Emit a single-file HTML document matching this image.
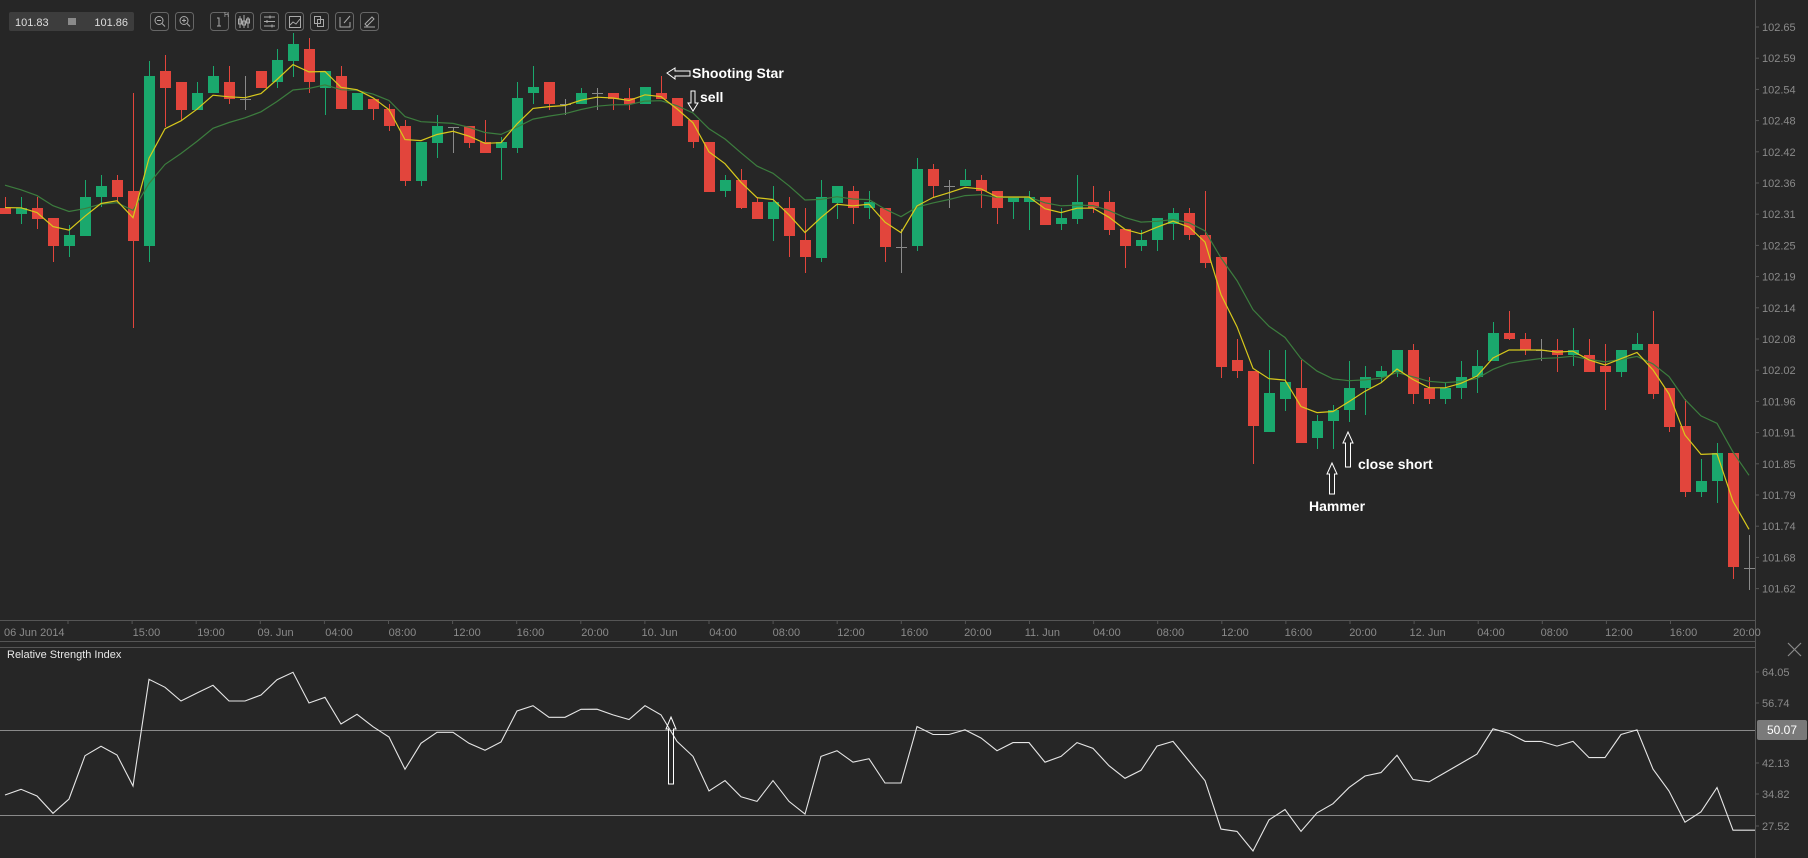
<!DOCTYPE html>
<html><head><meta charset="utf-8">
<style>
html,body{margin:0;padding:0;background:#262626;width:1808px;height:858px;overflow:hidden}
svg{display:block}
text{font-family:"Liberation Sans",sans-serif}
</style></head>
<body>
<svg id="s" width="1808" height="858" viewBox="0 0 1808 858" xmlns="http://www.w3.org/2000/svg">
<rect width="1808" height="858" fill="#262626"/>
<line x1="1755.5" y1="0" x2="1755.5" y2="858" stroke="#555" stroke-width="1"/>
<line x1="0" y1="620.5" x2="1755" y2="620.5" stroke="#555"/>
<line x1="0" y1="641.5" x2="1755" y2="641.5" stroke="#555"/>
<line x1="0" y1="647.5" x2="1755" y2="647.5" stroke="#555"/>
<line x1="0" y1="730.5" x2="1755" y2="730.5" stroke="#8a8a8a"/>
<line x1="0" y1="815.5" x2="1755" y2="815.5" stroke="#8a8a8a"/>
<g id="c"></g>
<g id="ax" fill="#8a8a8a" font-size="11"></g>
<text x="7" y="658" fill="#e8e8e8" font-size="11">Relative Strength Index</text>
<path d="M1788 643 L1801 656 M1801 643 L1788 656" stroke="#8a8a8a" stroke-width="1.2"/>
<rect x="1757" y="720" width="50" height="20" rx="2" fill="#7a7a7a"/>
<text x="1782" y="734" fill="#fff" font-size="12" text-anchor="middle">50.07</text>
<!-- toolbar -->
<rect x="9" y="12" width="125" height="19" rx="2" fill="#3d3d3d"/>
<text x="15" y="26" fill="#ddd" font-size="11">101.83</text>
<rect x="68" y="18" width="8" height="7" fill="#8a8a8a"/>
<text x="128" y="26" fill="#ddd" font-size="11" text-anchor="end">101.86</text>
<g fill="none" stroke="#666" stroke-width="1">
<rect x="150.5" y="12.5" width="18" height="18" rx="3"/>
<rect x="175.5" y="12.5" width="18" height="18" rx="3"/>
<rect x="210.5" y="12.5" width="18" height="18" rx="3"/>
<rect x="235.5" y="12.5" width="18" height="18" rx="3"/>
<rect x="260.5" y="12.5" width="18" height="18" rx="3"/>
<rect x="285.5" y="12.5" width="18" height="18" rx="3"/>
<rect x="310.5" y="12.5" width="18" height="18" rx="3"/>
<rect x="335.5" y="12.5" width="18" height="18" rx="3"/>
<rect x="360.5" y="12.5" width="18" height="18" rx="3"/>
</g>
<g fill="none" stroke="#aaa" stroke-width="1">
<circle cx="159" cy="20.5" r="4"/><path d="M157 20.5h4M162 23.5l3 3"/>
<circle cx="184" cy="20.5" r="4"/><path d="M182 20.5h4M184 18.5v4M187 23.5l3 3"/>
<path d="M217 18h2v8M217 26h4"/>
<path d="M240 16v12M244 15v13M248 17v11M238.5 19h3v5h-3zM242.5 21h3v4h-3zM246.5 19h3v4h-3z"/>
<path d="M264 17h11M264 21.5h11M264 26h11M270 15.5v3M267 20v3M272 24.5v3"/>
<rect x="289.5" y="16.5" width="11" height="11"/><path d="M290 25l3-3 3 2 4-5"/>
<rect x="314.5" y="16.5" width="6" height="7"/><rect x="317.5" y="19.5" width="6" height="7"/>
<path d="M340 17v10h10v-5M344 23l6-7"/>
<path d="M364 27h11M365 24l7-7 2 2-7 7z"/>
</g>
<text x="224" y="17" fill="#aaa" font-size="7">H</text>
<!-- annotations -->
<g fill="none" stroke="#fff" stroke-width="1">
<path d="M667 73 L675 68 L675 71 L690 71 L690 76 L675 76 L675 79 Z"/>
<path d="M691 91 L695 91 L695 103 L698 103 L693 111 L688 103 L691 103 Z"/>
<path d="M1332 463 L1337 474 L1334.5 474 L1334.5 494 L1329.5 494 L1329.5 474 L1327 474 Z"/>
<path d="M1348 432 L1353 443 L1350.5 443 L1350.5 467 L1345.5 467 L1345.5 443 L1343 443 Z"/>
<path d="M671 717 L676 729 L673.5 729 L673.5 784 L668.5 784 L668.5 729 L666 729 Z"/>
</g>
<g fill="#fff" font-size="14" font-weight="bold">
<text x="692" y="78">Shooting Star</text>
<text x="700" y="102">sell</text>
<text x="1309" y="511">Hammer</text>
<text x="1358" y="469">close short</text>
</g>
</svg>
<script>
var NS="http://www.w3.org/2000/svg";
function el(p,n,a,t){var e=document.createElementNS(NS,n);for(var k in a)e.setAttribute(k,a[k]);if(t)e.textContent=t;p.appendChild(e);return e;}
var c=document.getElementById('c'),ax=document.getElementById('ax');
var D=[["r",208,214,197,214],["g",208,214,197,224],["r",208,219,197,229],["r",218,246,218,262],["g",235,246,225,257],["g",197,236,180,236],["g",186,197,175,207],["r",180,197,175,202],["r",191,241,93,328],["g",76,246,61,262],
["r",71,88,55,127],["r",82,110,82,120],["g",93,110,82,110],["g",76,93,66,93],["r",82,99,66,104],["d",99,99,76,110],["r",71,88,71,88],["g",60,82,49,88],["g",44,61,33,77],["r",49,82,38,93],
["g",71,88,71,115],["r",76,109,66,109],["g",93,110,93,110],["r",99,109,99,120],["r",109,126,104,131],["r",126,181,120,186],["g",142,181,142,186],["g",126,143,115,158],["d",127,127,127,153],["r",126,143,126,148],
["r",142,153,120,153],["g",142,148,137,180],["g",98,148,82,153],["g",87,93,66,104],["r",82,104,82,110],["d",104,104,99,115],["g",93,104,88,104],["d",93,93,88,110],["r",93,99,93,110],["r",98,104,88,110],
["g",87,104,87,104],["r",93,99,76,99],["r",98,126,98,126],["r",120,142,120,148],["r",142,192,142,192],["g",180,191,175,197],["r",180,208,169,209],["r",202,219,197,219],["g",202,219,186,241],["r",208,236,197,257],
["r",240,257,208,273],["g",197,258,180,262],["g",186,203,186,219],["r",191,208,186,224],["g",202,208,191,219],["r",208,247,208,262],["d",247,247,229,273],["g",169,246,158,251],["r",169,186,164,197],["d",186,186,180,208],
["g",180,186,169,186],["r",180,191,175,208],["r",191,208,191,224],["g",197,202,197,219],["g",197,202,191,230],["r",197,225,197,225],["g",218,224,208,230],["g",202,219,175,224],["r",202,208,186,213],["r",202,230,191,235],
["r",229,246,229,268],["g",240,246,230,251],["g",218,240,218,251],["g",213,224,208,240],["r",213,235,208,240],["r",235,263,191,268],["r",257,367,257,378],["r",360,371,339,378],["r",371,426,371,464],["g",393,432,350,432],
["g",382,399,350,411],["r",388,443,360,443],["g",421,438,415,449],["g",410,421,405,449],["g",388,410,361,422],["g",377,388,366,415],["g",371,377,366,383],["g",350,372,350,377],["r",350,394,344,404],["r",388,399,377,404],
["g",388,399,383,404],["g",377,388,361,399],["g",366,377,350,393],["g",333,361,322,361],["r",333,339,311,340],["r",339,350,333,355],["d",350,350,339,361],["r",350,355,339,372],["g",350,355,328,366],["r",355,372,339,372],
["r",366,372,344,410],["g",350,372,350,377],["g",344,350,333,350],["r",344,394,311,399],["r",388,427,388,432],["r",426,492,399,497],["g",481,492,459,497],["g",453,481,443,503],["r",453,567,453,579],["d",568,568,535,590]];
var RED="#e2453c",GRN="#1aa86d",GRY="#8a8a8a";
var closes=[];
D.forEach(function(d,i){var x=5+16*i,col=d[0]=="r"?RED:d[0]=="g"?GRN:GRY;
 el(c,"line",{x1:x+.5,x2:x+.5,y1:d[3],y2:d[4],stroke:col,"stroke-width":1});
 if(d[0]=="d"){el(c,"line",{x1:x-5,x2:x+6,y1:d[1]+.5,y2:d[1]+.5,stroke:col});}
 else el(c,"rect",{x:x-5,y:d[1],width:11,height:Math.max(1,d[2]-d[1]),fill:col});
 closes.push(d[0]=="r"?d[2]:d[1]);
});
function ema(a,init,col,w){var v=init,p=[];closes.forEach(function(y,i){v=v+a*(y-v);p.push((5+16*i)+","+v.toFixed(1));});
 el(c,"polyline",{points:p.join(" "),fill:"none",stroke:col,"stroke-width":w});}
ema(0.2,178,"#3c7d3e",1.2);
ema(0.42,203,"#d8c91c",1.2);
var r1=[555,538,558,610,567,437,409,435,528,208,232,273,249,226,273,273,255,209,187,279,262,342,313,350,381,478,400,367,367,400,421,396,303,287,322,322,298];
var r2=[615,620,624,612,620,643,656,686,677,691,695,677,695,706,656,651,661,658,679,679,630,637,637,633,640,651,644,644,661,656,644,649,664,675,668,647,643,660,677,719,721,738,711,702,721,705,697,683,673,670,655,676,678,670,662,654,632,636,643,643,647,643,657,657,637,633,667,686,713,704,683,720,720];
var rp=[];r1.forEach(function(z,i){rp.push((5+16*i)+","+(610+z/3).toFixed(1));});
r2.forEach(function(z,i){rp.push((5+16*(i+37))+","+(z*1.1531).toFixed(1));});
rp.push("1755,"+(720*1.1531).toFixed(1));
el(c,"polyline",{points:rp.join(" "),fill:"none",stroke:"#e6e6e6","stroke-width":1.1});
var P=["102.65","102.59","102.54","102.48","102.42","102.36","102.31","102.25","102.19","102.14","102.08","102.02","101.96","101.91","101.85","101.79","101.74","101.68","101.62"];
P.forEach(function(t,i){var y=27+31.2*i;el(ax,"line",{x1:1755,x2:1759,y1:y,y2:y,stroke:"#555"});el(ax,"text",{x:1762,y:y+4},t);});
[["64.05",672],["56.74",703],["42.13",763],["34.82",794],["27.52",826]].forEach(function(a){el(ax,"line",{x1:1755,x2:1759,y1:a[1],y2:a[1],stroke:"#555"});el(ax,"text",{x:1762,y:a[1]+4},a[0]);});
var T=[["15:00",127],["19:00",183],["09. Jun",239],["04:00",294],["08:00",349],["12:00",405],["16:00",460],["20:00",516],["10. Jun",572],["04:00",627],["08:00",682],["12:00",738],["16:00",793],["20:00",848],["11. Jun",904],["04:00",960],["08:00",1015],["12:00",1071],["16:00",1126],["20:00",1182],["12. Jun",1238],["04:00",1293],["08:00",1348],["12:00",1404],["16:00",1460],["20:00",1515]];
el(ax,"text",{x:4,y:636},"06 Jun 2014");
for(var k=0;k<26;k++){var tx=68+k*64.1;el(ax,"line",{x1:tx,x2:tx,y1:620,y2:624,stroke:"#555"});}
T.forEach(function(t){var x=t[1]*1.1531;el(ax,"text",{x:x,y:636,"text-anchor":"middle"},t[0]);});
</script>
</body></html>
